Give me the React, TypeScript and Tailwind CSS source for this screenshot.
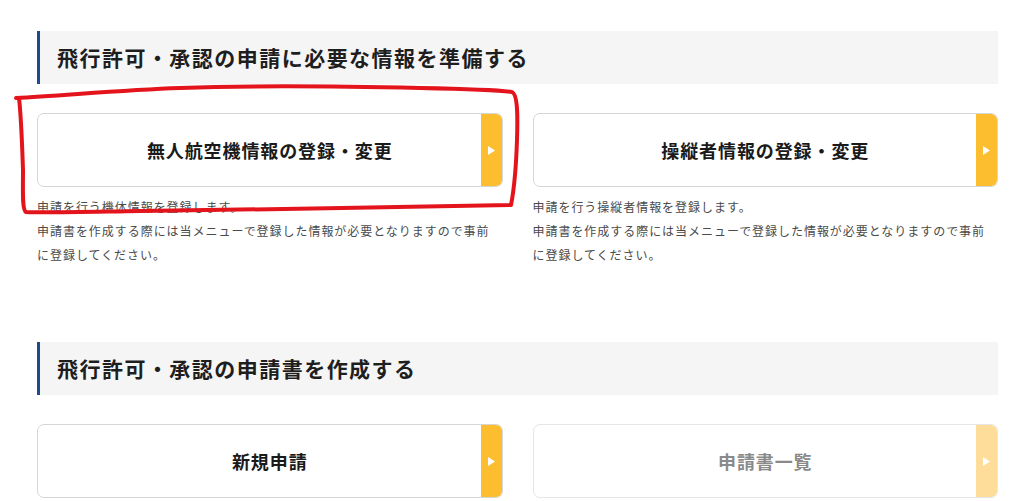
const jp = { fontFamily: '"Noto Sans CJK JP", "Noto Sans", sans-serif' };

type TMenuCard = {
  title: string;
  disabled?: boolean;
};

const MenuCard = ({ title, disabled }: TMenuCard) => {
  return (
    <div
      className={`relative h-[74px] rounded-[7px] border bg-white flex items-center justify-center overflow-hidden ${
        disabled ? "border-[#e6e6e6]" : "border-[#d6d6d6]"
      }`}
    >
      <span
        className={`text-[18px] font-bold tracking-[0.05em] ${
          disabled ? "text-[#8a8a8a]" : "text-[#1a1a1a]"
        }`}
      >
        {title}
      </span>
      {/* arrow strip */}
      <div
        className={`absolute right-0 top-0 bottom-0 w-[21px] flex items-center justify-center ${
          disabled ? "bg-[#fedd9b]" : "bg-[#fcbe2f]"
        }`}
      >
        <svg width="7" height="9" viewBox="0 0 7 9">
          <path d="M0 0 L7 4.5 L0 9 Z" fill="#fff" />
        </svg>
      </div>
    </div>
  );
};

const SectionTitle = ({ children }: { children: string }) => (
  <h2 className="h-[53px] flex items-center bg-[#f5f5f5] border-l-[3px] border-[#1d4c8e] pl-[17px] text-[21px] font-bold tracking-[0.07em] text-[#1e1e1e]">
    {children}
  </h2>
);

const Description = ({ lines }: { lines: string[] }) => (
  <p className="mt-[8px] text-[12px] leading-[24px] tracking-[0.08em] text-[#4a4a4a]">
    {lines.map((l, i) => (
      <span key={i}>
        {l}
        {i < lines.length - 1 && <br />}
      </span>
    ))}
  </p>
);

export default function App() {
  return (
    <div className="relative w-[1024px] h-[501px] overflow-hidden bg-white" style={jp}>
      <div className="pl-[37px] w-[998px] pt-[31px]">
        <SectionTitle>飛行許可・承認の申請に必要な情報を準備する</SectionTitle>

        <div className="grid grid-cols-2 gap-x-[30px] mt-[29px]">
          <div>
            <MenuCard title="無人航空機情報の登録・変更" />
            <Description
              lines={[
                "申請を行う機体情報を登録します。",
                "申請書を作成する際には当メニューで登録した情報が必要となりますので事前",
                "に登録してください。",
              ]}
            />
          </div>
          <div>
            <MenuCard title="操縦者情報の登録・変更" />
            <Description
              lines={[
                "申請を行う操縦者情報を登録します。",
                "申請書を作成する際には当メニューで登録した情報が必要となりますので事前",
                "に登録してください。",
              ]}
            />
          </div>
        </div>

        <div className="mt-[75px]">
          <SectionTitle>飛行許可・承認の申請書を作成する</SectionTitle>
        </div>

        <div className="grid grid-cols-2 gap-x-[30px] mt-[29px]">
          <MenuCard title="新規申請" />
          <MenuCard title="申請書一覧" disabled />
        </div>
      </div>

      {/* hand-drawn red annotation */}
      <svg
        className="absolute left-0 top-0 pointer-events-none"
        width="1024"
        height="501"
        viewBox="0 0 1024 501"
      >
        <path
          d="M16 98 C 60 96, 120 90, 180 88 C 260 85, 330 86, 420 88 C 470 89, 500 90, 512 92 C 517 94, 518 110, 517 140 C 516 170, 514 190, 511 205 C 400 207, 250 210, 140 211 C 80 212, 40 213, 26 212 C 22 210, 23 190, 23 170 C 22 140, 21 115, 19 98"
          fill="none"
          stroke="#e3141c"
          strokeWidth="4"
          strokeLinecap="round"
          strokeLinejoin="round"
        />
      </svg>
    </div>
  );
}
